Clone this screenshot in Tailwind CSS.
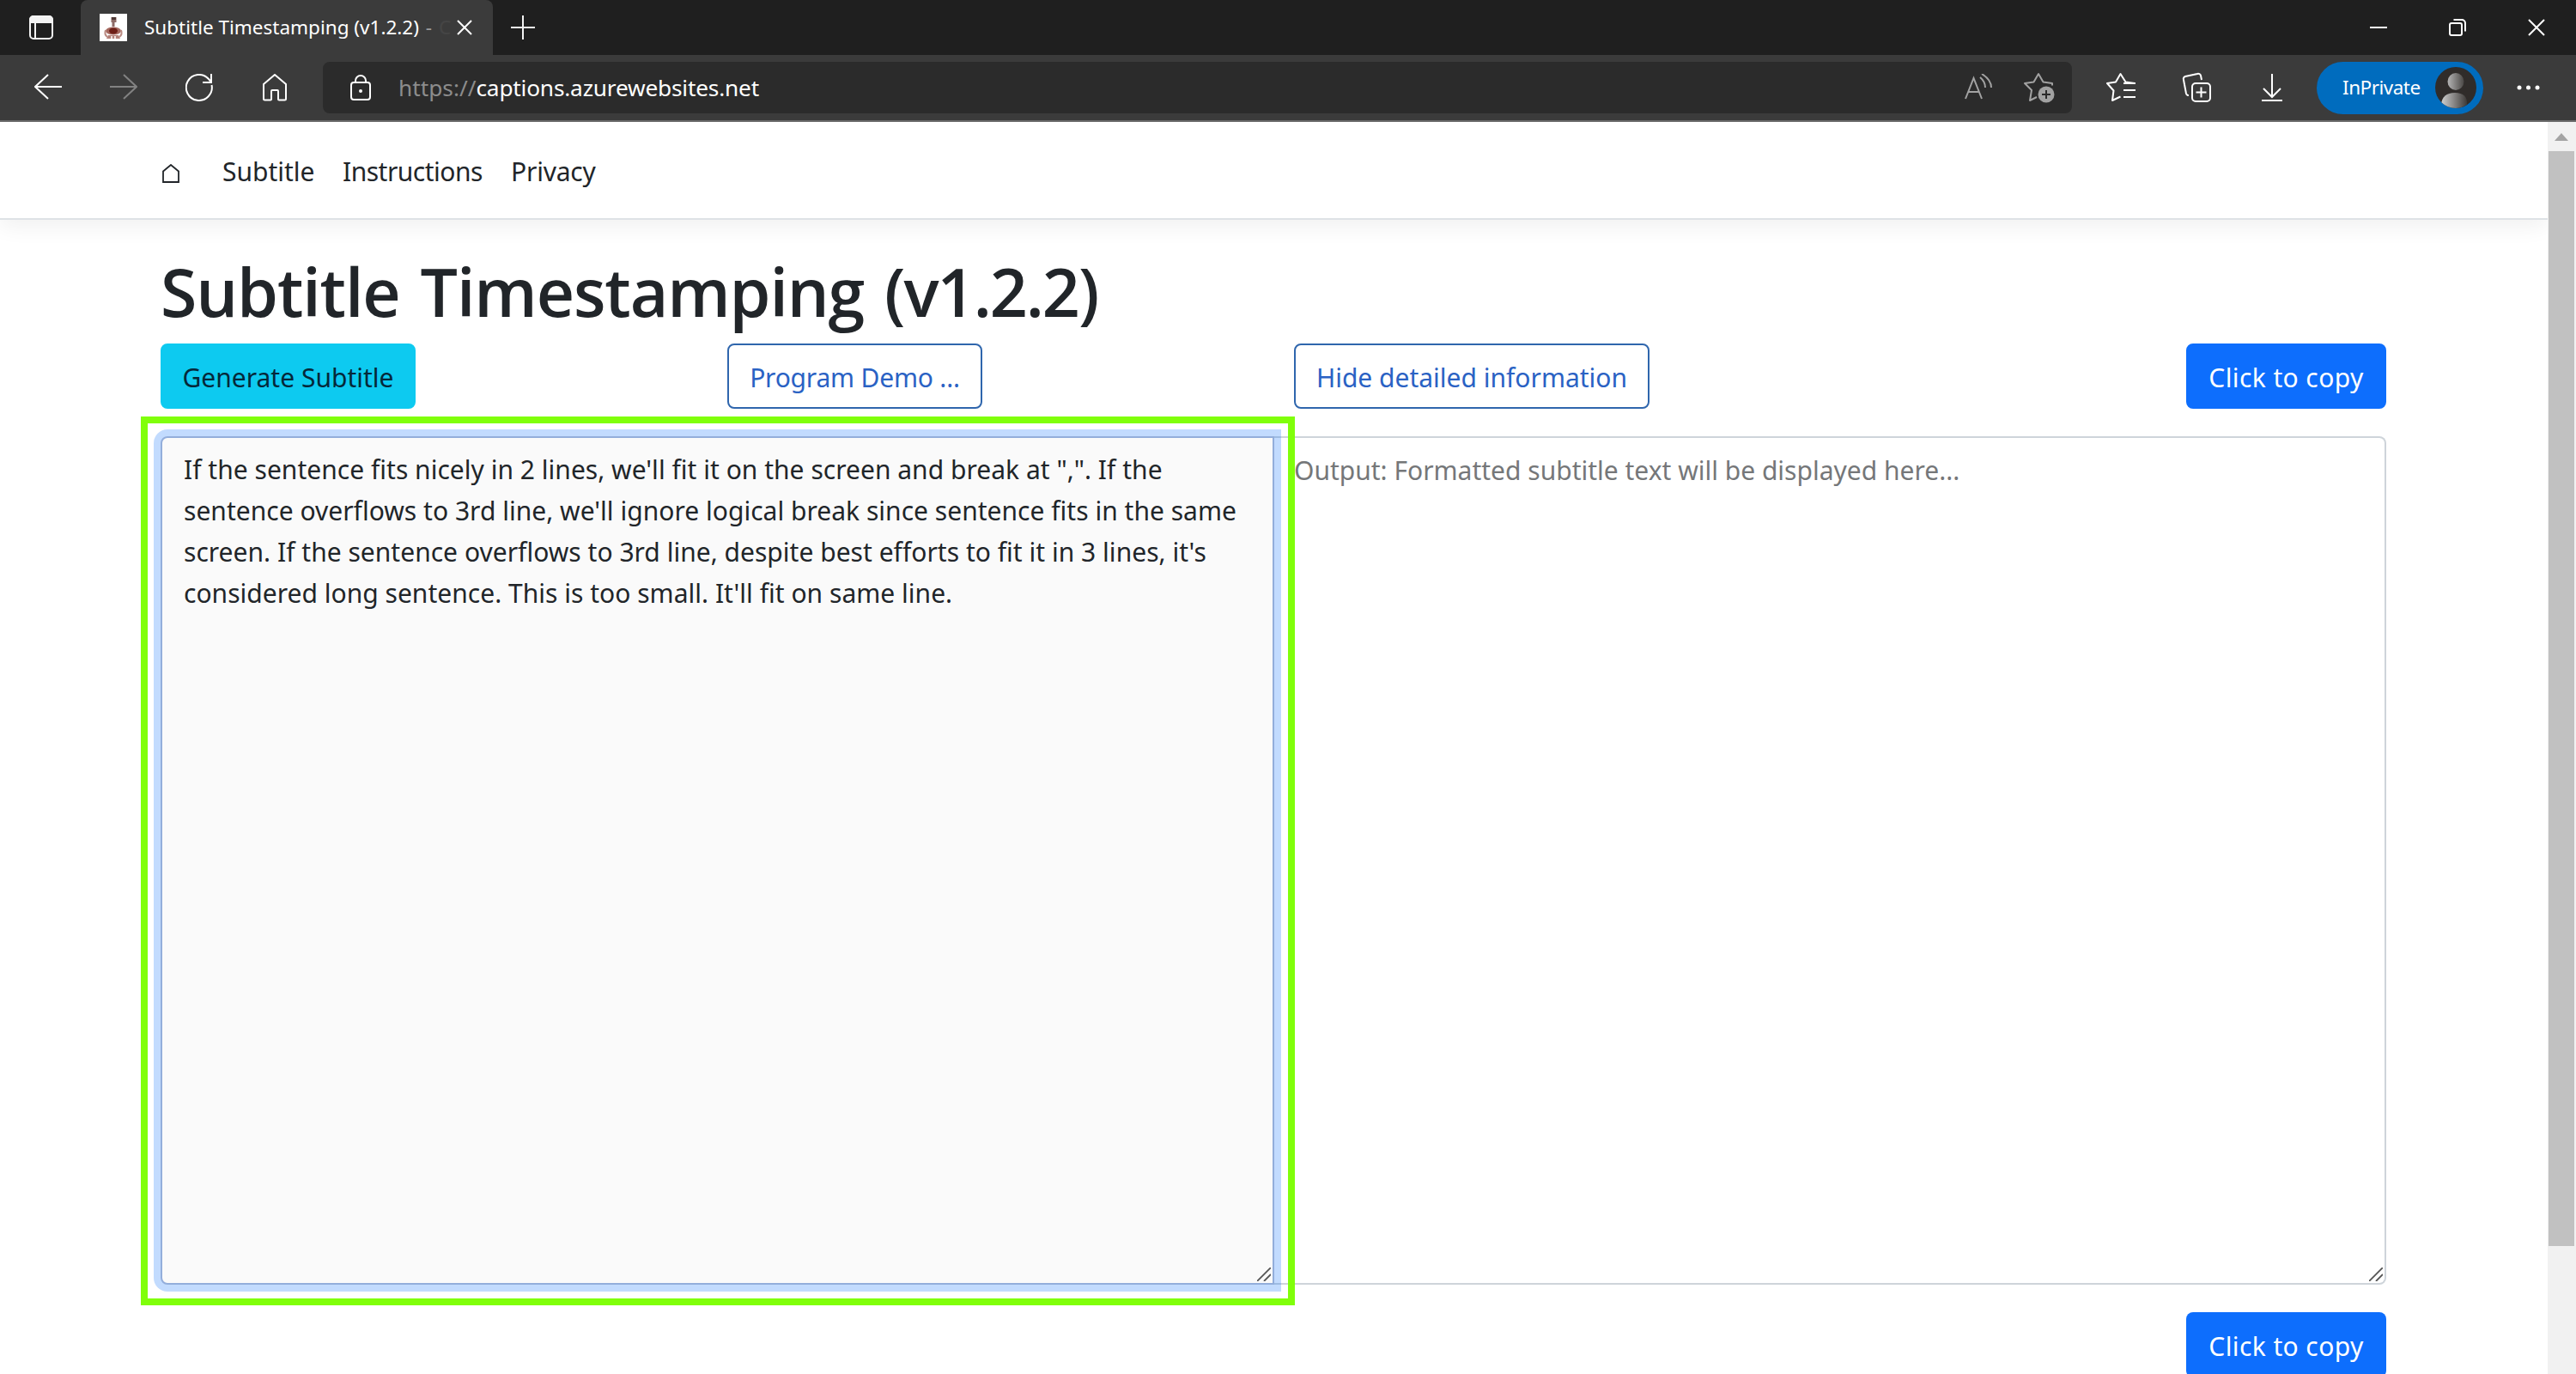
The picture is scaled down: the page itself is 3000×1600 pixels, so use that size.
<!DOCTYPE html>
<html lang="en">
<head>
  <meta charset="UTF-8" />
  <meta name="viewport" content="width=device-width, initial-scale=1.0"/>
  <title>Subtitle Timestamping (v1.2.2)</title>
  <script src="https://cdn.jsdelivr.net/npm/@tailwindcss/browser@4"></script>
</head>
<body class="h-[1600px] w-[3000px] overflow-hidden bg-white font-['Noto_Sans','Open_Sans',sans-serif] text-[30px] leading-[48px] text-[#212529]">

  <!-- Tab strip -->
  <div class="flex h-16 bg-[#1f1f1f] text-white">
    <div class="flex h-16 w-[94px] items-center justify-center pl-[2px]">
      <svg class="h-8 w-8" viewBox="0 0 32 32" fill="none" stroke="#f3f3f3" stroke-width="2">
        <rect x="3" y="3" width="26" height="26" rx="4"/>
        <path d="M3 7a4 4 0 0 1 4-4h18a4 4 0 0 1 4 4v3H3z" fill="#f3f3f3"/>
        <path d="M9 10v19"/>
      </svg>
    </div>
    <div class="flex w-[480px] items-center rounded-t-lg bg-[#3b3b3b] pl-[22px]">
      <svg class="h-8 w-8 shrink-0" viewBox="0 0 32 32">
        <rect width="32" height="32" fill="#fff"/>
        <path d="M13.500 4h6v6h-2v5h-3v-5h-1z" fill="#8d6a66"/>
        <rect x="14" y="4" width="5" height="3" fill="#4e3936"/>
        <ellipse cx="16" cy="20" rx="9" ry="4.500" fill="#a5685f"/>
        <ellipse cx="16" cy="20" rx="5" ry="3.500" fill="#6e1f17"/>
        <path d="M7 19q-2 5 2 8M25 19q2 5-2 8" stroke="#b98a82" stroke-width="2" fill="none"/>
        <path d="M10 25h12l2 4H8z" fill="#b4827a"/>
        <path d="M13 26h2v3h-2zM17 26h2v3h-2z" fill="#efe3e0"/>
      </svg>
      <div class="ml-5 flex w-[363px] text-[22.500px] whitespace-nowrap">
        <span>Subtitle Timestamping (v1.2.2)&nbsp;</span><span class="ml-[2px] text-white/50">-</span><span class="ml-2 text-white/5">C</span>
      </div>
      <svg class="h-5 w-5" viewBox="0 0 20 20" stroke="#fff" stroke-width="2"><path d="M2 2l16 16M18 2L2 18"/></svg>
    </div>
    <div class="flex w-[70px] items-center justify-center">
      <svg class="h-7 w-7" viewBox="0 0 28 28" stroke="#f3f3f3" stroke-width="2"><path d="M0 14h28M14 0v28"/></svg>
    </div>
    <div class="ml-auto flex items-center gap-[72px] pr-9">
      <svg class="h-5 w-5" viewBox="0 0 20 20" stroke="#fff" stroke-width="2"><path d="M0 10h20"/></svg>
      <svg class="h-5 w-5" viewBox="0 0 20 20" fill="none" stroke="#fff" stroke-width="2"><rect x="1" y="5" width="14" height="14" rx="2"/><path d="M5.500 1H15a4 4 0 0 1 4 4v9.500"/></svg>
      <svg class="h-5 w-5" viewBox="0 0 20 20" stroke="#fff" stroke-width="2"><path d="M1 1l18 18M19 1L1 19"/></svg>
    </div>
  </div>

  <!-- Toolbar -->
  <div class="flex h-[78px] items-start border-b-2 border-[#6a6a6a] bg-[#3b3b3b] pt-2 text-white">
    <div class="flex h-[60px] w-[376px] shrink-0 items-center gap-14 pl-10 [&>svg]:shrink-0">
      <svg class="h-8 w-8" viewBox="0 0 32 32" fill="none" stroke="#fff" stroke-width="2"><path d="M32 15H2M16 1L1 15l15 14"/></svg>
      <svg class="h-8 w-8" viewBox="0 0 32 32" fill="none" stroke="#828282" stroke-width="2"><path d="M0 15h30M16 1l15 14-15 14"/></svg>
      <svg class="h-8 w-8" viewBox="0 0 32 32" fill="none" stroke="#fff" stroke-width="2"><path d="M30.500 13A15 15 0 1 1 27 6l3 3.500M30 0v10H20"/></svg>
      <svg class="h-8 w-8" viewBox="0 0 32 32" fill="none" stroke="#fff" stroke-width="2" stroke-linejoin="round"><path d="M3 12L16 1l13 11v17a1.500 1.500 0 0 1-1.500 1.500H21a1 1 0 0 1-1-1V20a1 1 0 0 0-1-1h-6a1 1 0 0 0-1 1v9.500a1 1 0 0 1-1 1H4.500A1.500 1.500 0 0 1 3 29z"/></svg>
    </div>
    <div class="flex h-[60px] w-[2037px] shrink-0 items-center rounded-lg bg-[#2b2b2b] pr-5 pl-8">
      <svg class="mr-8 h-[30px] w-6" viewBox="0 0 24 30" fill="none" stroke="#fff" stroke-width="2"><rect x="1" y="9" width="22" height="20" rx="3"/><path d="M6 9V7a6 6 0 0 1 12 0v2"/><circle cx="12" cy="19" r="1" fill="#fff"/></svg>
      <span class="text-[26.250px] text-[#8c8c8c]">https://</span><span class="text-[26.250px] tracking-[-0.200px]">captions.azurewebsites.net</span>
      <svg class="mr-[37px] ml-auto h-8 w-8" viewBox="0 0 32 32" fill="none" stroke="#a2a2a2" stroke-width="2"><path d="M1 29L10.500 5 20 29M4.500 21h12M18 4q6 5 6 12M20 0q11 7 11 16"/></svg>
      <svg class="h-9 w-9" viewBox="0 0 36 36" fill="none" stroke="#a2a2a2" stroke-width="2" stroke-linejoin="round"><path d="M33 15.500V13l-10.500-1.500L17 2l-5.500 9.500L1 13l8 8-2 12 8-4"/><circle cx="26" cy="26" r="9.500" fill="#a2a2a2" stroke="none"/><path d="M26 21v10M21 26h10" stroke="#2b2b2b"/></svg>
    </div>
    <div class="flex h-[60px] flex-1 items-center pl-10 [&>svg]:shrink-0">
      <svg class="h-9 w-9" viewBox="0 0 36 36" fill="none" stroke="#fff" stroke-width="2" stroke-linejoin="round"><path d="M33 13l-10.500-1.500L16.500 2 11 11.500 1 13l7.500 8.500L7 33l9.500-4.500M20 13h14M20 21h14M20 29h14"/></svg>
      <svg class="ml-[52px] h-9 w-9" viewBox="0 0 36 36" fill="none" stroke="#fff" stroke-width="2"><rect x="12" y="13" width="21" height="21" rx="4"/><path d="M22.500 17.500v12M16.500 23.500h12M8 27H7a3 3 0 0 1-2-2L2 9a3 3 0 0 1 2-4l14-3a3 3 0 0 1 4 2l1 5"/></svg>
      <svg class="ml-[51px] h-9 w-9" viewBox="0 0 36 36" fill="none" stroke="#fff" stroke-width="2"><path d="M18 2v27M8 19l10 10 10-10M6 33h24"/></svg>
      <div class="ml-[34px] flex h-[61px] w-[194px] shrink-0 items-center justify-between rounded-full bg-[#006cbe] pr-2 pl-[30px] text-[22.500px] tracking-[-0.500px]">
        <span>InPrivate</span>
        <svg class="h-12 w-12" viewBox="0 0 48 48">
          <defs>
            <linearGradient id="head"><stop offset="0" stop-color="#b5b5b5"/><stop offset="1" stop-color="#4a4745"/></linearGradient>
            <linearGradient id="body"><stop offset="0" stop-color="#d0d0d0"/><stop offset="1" stop-color="#3d3a38"/></linearGradient>
            <clipPath id="avatar"><circle cx="24" cy="24" r="24"/></clipPath>
          </defs>
          <g clip-path="url(#avatar)">
            <rect width="48" height="48" fill="#302c2a"/>
            <ellipse cx="24" cy="17" rx="9.500" ry="10" fill="url(#head)"/>
            <path d="M7 44q1-14 16-14t14 14l-8 4H16z" fill="url(#body)"/>
          </g>
        </svg>
      </div>
      <svg class="ml-[39px] h-7 w-7" viewBox="0 0 28 28" fill="#fff"><circle cx="3" cy="14" r="2.500"/><circle cx="13.500" cy="14" r="2.500"/><circle cx="24" cy="14" r="2.500"/></svg>
    </div>
  </div>

  <div class="flex h-[1458px]">
    <!-- Page -->
    <div class="w-[2967px] overflow-hidden">
      <nav class="flex h-[114px] items-center border-b-2 border-[#dee2e6] pt-1 pl-[188px] shadow-[0_8px_24px_rgba(0,0,0,0.06)]">
        <svg class="mt-1 h-[22px] w-[22px]" viewBox="0 0 22 22" fill="none" stroke="#212529" stroke-width="1.800"><path d="M2 8.500L11 1l9 7.500V21H2z"/></svg>
        <a class="ml-[49px] w-[140px]">Subtitle</a>
        <a class="w-[196px] tracking-[-0.500px]">Instructions</a>
        <a class="tracking-[-0.200px]">Privacy</a>
      </nav>

      <main class="w-[2779px] pl-[187px]">
        <h1 class="mt-9 flex h-[95px] font-['Open_Sans',sans-serif] text-[77px] leading-[96px] font-semibold tracking-[-1.100px] whitespace-pre"><span class="mr-[5px]">Subtitle </span><span class="mr-[5px]">Timestamping </span><span class="tracking-[-2px]">(v1.2.2)</span></h1>

        <!-- Buttons -->
        <div class="mt-[13px] grid grid-cols-[660px_660px_1fr_auto] [&>button]:h-[76px] [&>button]:justify-self-start [&>button]:rounded-lg [&>button]:border-2 [&>button]:pt-[3px] [&>button]:whitespace-nowrap">
          <button class="w-[297px] border-[#0dcaf0] bg-[#0dcaf0] text-[#05283a]">Generate Subtitle</button>
          <button class="w-[297px] border-[#2f66ad] tracking-[-0.200px] text-[#2a62c4]">Program Demo ...</button>
          <button class="w-[414px] border-[#2f66ad] text-[#2a62c4]">Hide detailed information</button>
          <button class="w-[233px] border-[#0d6efd] bg-[#0d6efd] tracking-[0.400px] text-white">Click to copy</button>
        </div>

        <!-- Input and output -->
        <div class="relative mt-8 flex h-[988px]">
          <div class="relative z-10 w-[1297px] rounded-l-lg border-2 border-[#93aedb] bg-[#fafafa] pt-[13px] pl-[25px] tracking-[0.020px] whitespace-nowrap ring-8 ring-[#0d6efd]/25">
            If the sentence fits nicely in 2 lines, we'll fit it on the screen and break at ",". If the<br>
            sentence overflows to 3rd line, we'll ignore logical break since sentence fits in the same<br>
            screen. If the sentence overflows to 3rd line, despite best efforts to fit it in 3 lines, it's<br>
            considered long sentence. This is too small. It'll fit on same line.
            <svg class="absolute right-[2px] bottom-[2px] h-4 w-4" viewBox="0 0 16 16" stroke="#555" stroke-width="1.800"><path d="M0 16L16 0M8 16l8-8"/></svg>
          </div>
          <div class="relative flex-1 rounded-r-lg border-2 border-l-0 border-[#ced4da] pt-[14px] pl-[23px] text-[#757779]">
            Output: Formatted subtitle text will be displayed here...
            <svg class="absolute right-[2px] bottom-[2px] h-4 w-4" viewBox="0 0 16 16" stroke="#555" stroke-width="1.800"><path d="M0 16L16 0M8 16l8-8"/></svg>
          </div>
          <!-- Highlight frame -->
          <div class="absolute top-[-23px] left-[-23px] z-20 h-[1035px] w-[1344px] border-8 border-[#80ff0a]"></div>
        </div>

        <div class="mt-8 flex justify-end">
          <button class="h-[76px] w-[233px] rounded-lg bg-[#0d6efd] pt-[3px] tracking-[0.400px] text-white">Click to copy</button>
        </div>
      </main>
    </div>

    <!-- Scrollbar -->
    <div class="flex w-[33px] flex-col bg-[#f1f1f1] pr-[2px] pl-[1px]">
      <svg class="h-[34px] w-[30px]" viewBox="0 0 30 34"><path d="M7 22l8-9 8 9z" fill="#a3a3a3"/></svg>
      <div class="h-[1275px] bg-[#c1c1c1]"></div>
    </div>
  </div>

</body>
</html>
